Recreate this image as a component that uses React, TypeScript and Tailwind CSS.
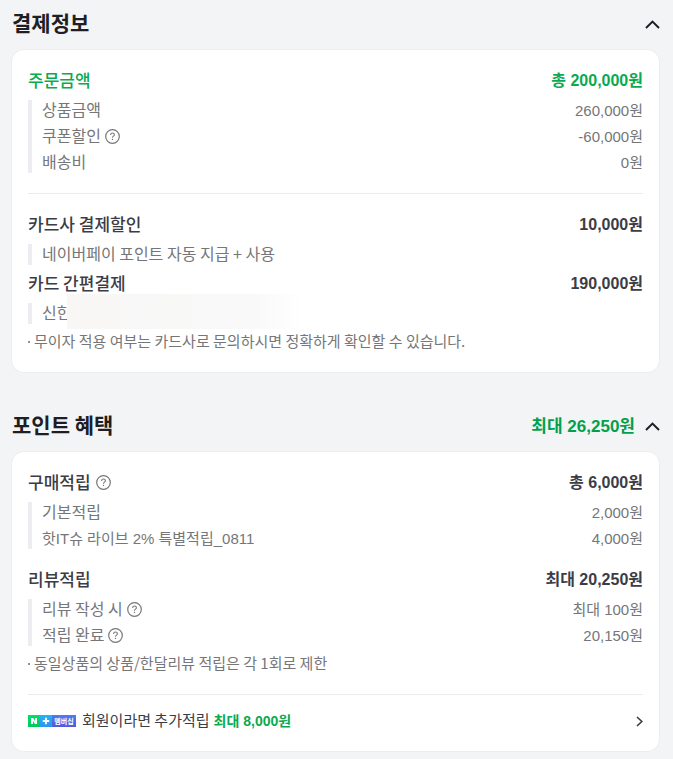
import { useState, type ReactNode } from 'react'

type Item = {
  label: string
  amount?: string
  help?: boolean
  mixed?: boolean
  masked?: boolean
}

const orderItems: Item[] = [
  { label: '상품금액', amount: '260,000원' },
  { label: '쿠폰할인', amount: '-60,000원', help: true },
  { label: '배송비', amount: '0원' },
]

const purchaseItems: Item[] = [
  { label: '기본적립', amount: '2,000원' },
  { label: '핫IT슈 라이브 2% 특별적립_0811', amount: '4,000원', mixed: true },
]

const reviewItems: Item[] = [
  { label: '리뷰 작성 시', amount: '최대 100원', help: true },
  { label: '적립 완료', amount: '20,150원', help: true },
]

function HelpButton({ label }: { label: string }) {
  return (
    <button type="button" aria-label={`${label} 도움말`} className="shrink-0 cursor-pointer text-[#777]">
      <svg width="15" height="15" viewBox="0 0 15 15" fill="none" stroke="currentColor" className="block">
        <circle cx="7.5" cy="7.5" r="6.8" strokeWidth="1.2" />
        <path d="M5.6 5.9c0-1.1.8-1.9 1.9-1.9s1.9.7 1.9 1.7c0 1.4-1.9 1.5-1.9 3" strokeWidth="1.1" />
        <path d="M7.5 9.8v1.2" strokeWidth="1.2" />
      </svg>
    </button>
  )
}

function Section({ title, total, children }: { title: string; total?: string; children: ReactNode }) {
  const [open, setOpen] = useState(true)

  return (
    <section>
      <div className="mb-1 flex h-[46px] items-center justify-between">
        <h2 className="pb-0.5 text-[21px] leading-7 font-bold text-[#1e1e23]">{title}</h2>
        <div className="flex items-center gap-2.5">
          {total && (
            <strong className="pt-1 font-['Liberation_Sans','Noto_Sans_CJK_KR',sans-serif] text-[17px] leading-7 font-bold text-[#02a04a]">
              {total}
            </strong>
          )}
          <button
            type="button"
            aria-expanded={open}
            aria-label={`${title} 접기/펼치기`}
            onClick={() => setOpen(!open)}
            className="-mr-px cursor-pointer pt-0.5 text-[#1e1e23]"
          >
            <svg
              width="15"
              height="9"
              viewBox="0 0 15 9"
              fill="none"
              stroke="currentColor"
              strokeWidth="2"
              className={open ? 'block' : 'block rotate-180'}
            >
              <path d="M1 8l6.5-6.4L14 8" />
            </svg>
          </button>
        </div>
      </div>
      {open && (
        <div className="rounded-xl bg-white px-4 pt-4 pb-5 shadow-[0_0_1px_1px_rgba(0,0,0,0.03)]">{children}</div>
      )}
    </section>
  )
}

function Group({
  title,
  amount,
  help,
  green,
  items,
}: {
  title: string
  amount: string
  help?: boolean
  green?: boolean
  items: Item[]
}) {
  return (
    <div className={green ? 'text-[#09aa50]' : 'text-[#3c3c46]'}>
      <div className="mb-1.5 flex h-7 items-center justify-between">
        <div className="flex items-center gap-[5px]">
          <h3 className="pb-px text-[17px] leading-6 font-medium">{title}</h3>
          {help && <HelpButton label={title} />}
        </div>
        <strong className="pt-0.5 font-['Liberation_Sans','Noto_Sans_CJK_KR',sans-serif] text-base leading-6 font-bold">
          {amount}
        </strong>
      </div>
      <ul className="flex flex-col gap-[5px] border-l-4 border-[#ecedf1] pl-2.5 text-[#767678]">
        {items.map((item) => (
          <li key={item.label} className="relative flex h-[21px] items-center justify-between">
            <div className="flex items-center gap-1">
              {item.mixed ? (
                <span className="font-['Liberation_Sans','Noto_Sans_CJK_KR',sans-serif] text-[15px] leading-5">
                  {item.label}
                </span>
              ) : (
                <span className="pb-1 text-base leading-4">{item.label}</span>
              )}
              {item.help && <HelpButton label={item.label} />}
            </div>
            {item.amount && (
              <span className="font-['Liberation_Sans','Noto_Sans_CJK_KR',sans-serif] text-[15px] leading-5">
                {item.amount}
              </span>
            )}
            {/* 카드 정보 가림 */}
            {item.masked && (
              <span className="absolute -top-[9px] left-[25px] h-[35px] w-[235px] bg-linear-to-r from-[#f8f7f6] via-[#f9f9f9] via-80% to-white" />
            )}
          </li>
        ))}
      </ul>
    </div>
  )
}

function Note({ children }: { children: ReactNode }) {
  return (
    <p className="mt-2 flex items-center gap-1 text-[15px] leading-5 text-[#767678]">
      <span className="size-0.5 shrink-0 bg-[#8f8f94]" />
      <span className="pb-0.5 leading-[18px]">{children}</span>
    </p>
  )
}

function MembershipBadge() {
  return (
    <span className="flex h-3 w-12 shrink-0 items-center overflow-hidden text-white">
      <span className="flex h-3 w-3 items-center justify-center bg-linear-to-b from-[#00e06a] to-[#03c75a]">
        <svg width="8" height="8" viewBox="0 0 8 8" fill="currentColor">
          <path d="M1 1h2.2L5 4V1h2v6H4.9L3 4.1V7H1z" />
        </svg>
      </span>
      <span className="flex h-3 w-3 items-center justify-center bg-linear-to-b from-[#1fb4f5] to-[#2e94ef]">
        <svg width="8" height="8" viewBox="0 0 8 8" stroke="currentColor" strokeWidth="1.8">
          <path d="M4 .8v6.4M.8 4h6.4" />
        </svg>
      </span>
      <span className="flex h-3 flex-1 items-center justify-center bg-linear-to-b from-[#4a7df0] to-[#5558d8] text-[7px] leading-3 font-bold">
        멤버십
      </span>
    </span>
  )
}

export default function App() {
  return (
    <main className="flex min-h-screen flex-col gap-[30px] bg-[#f3f4f6] pr-3.5 pb-2 pl-3 font-['Noto_Sans_CJK_KR',sans-serif]">
      <Section title="결제정보">
        <Group title="주문금액" amount="총 200,000원" green items={orderItems} />
        <hr className="mt-5 mb-4 border-[#ebebed]" />
        <div className="flex flex-col gap-1">
          <Group
            title="카드사 결제할인"
            amount="10,000원"
            items={[{ label: '네이버페이 포인트 자동 지급 + 사용' }]}
          />
          <Group title="카드 간편결제" amount="190,000원" items={[{ label: '신한', masked: true }]} />
        </div>
        <Note>무이자 적용 여부는 카드사로 문의하시면 정확하게 확인할 수 있습니다.</Note>
      </Section>

      <Section title="포인트 혜택" total="최대 26,250원">
        <div className="flex flex-col gap-4">
          <Group title="구매적립" amount="총 6,000원" help items={purchaseItems} />
          <Group title="리뷰적립" amount="최대 20,250원" items={reviewItems} />
        </div>
        <Note>동일상품의 상품/한달리뷰 적립은 각 1회로 제한</Note>
        <hr className="mt-5 mb-4 border-[#ebebed]" />
        <a href="#membership" className="flex h-5 items-center text-[15px] leading-5 text-[#3c3c46]">
          <MembershipBadge />
          <span className="ml-1.5 pb-0.5 leading-[18px]">회원이라면 추가적립</span>
          <strong className="ml-1 font-['Liberation_Sans','Noto_Sans_CJK_KR',sans-serif] text-sm leading-5 font-bold text-[#09aa50]">
            최대 8,000원
          </strong>
          <svg
            width="7"
            height="11"
            viewBox="0 0 7 11"
            fill="none"
            stroke="currentColor"
            strokeWidth="1.6"
            className="ml-auto"
          >
            <path d="M1 1l4.8 4.5L1 10" />
          </svg>
        </a>
      </Section>
    </main>
  )
}
